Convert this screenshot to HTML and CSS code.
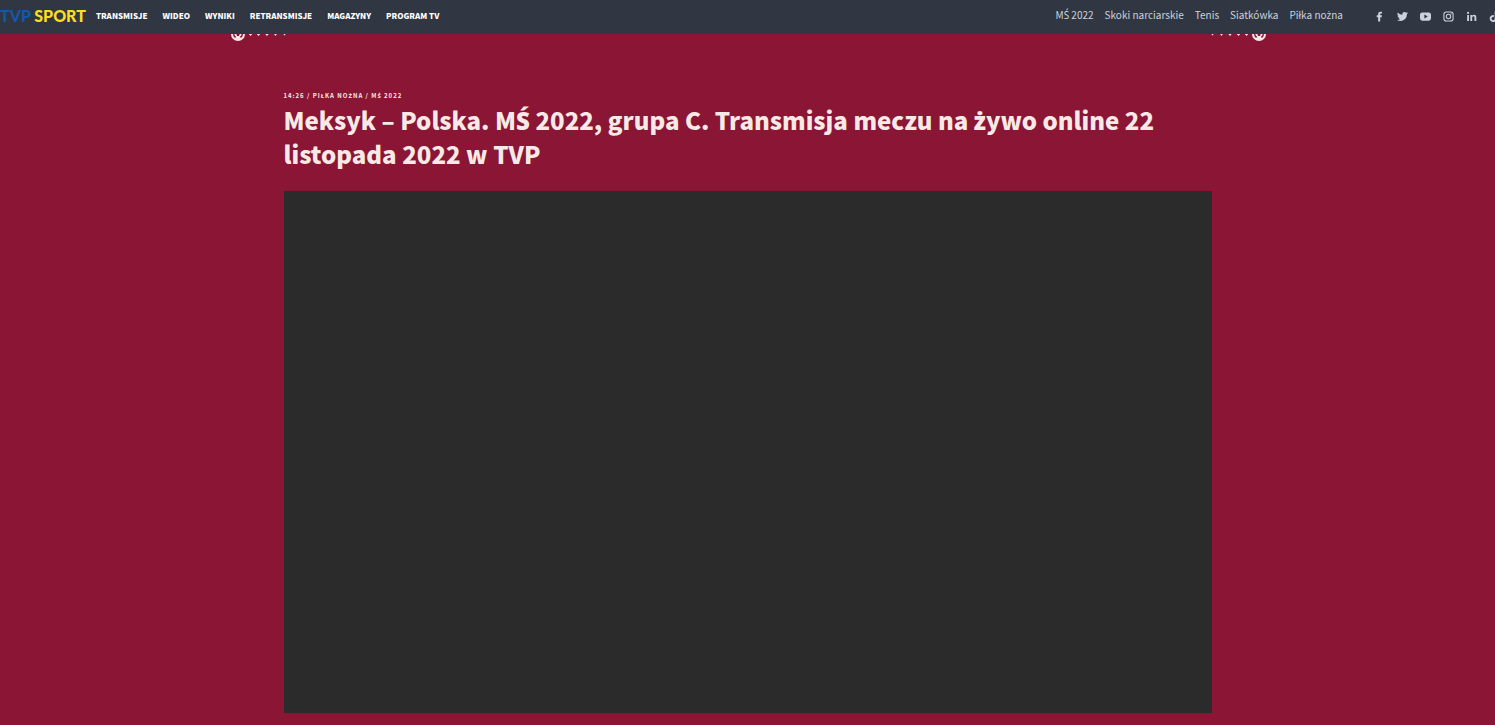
FILE: index.html
```html
<!DOCTYPE html>
<html lang="pl">
<head>
<meta charset="utf-8">
<meta name="viewport" content="width=device-width, initial-scale=1">
<title>Meksyk – Polska. MŚ 2022 | TVP Sport</title>
<link rel="stylesheet" href="styles.css">
</head>
<body>
<header class="topbar">
  <a class="logo" href="#"><span class="logo-tvp">TVP</span> <span class="logo-sport">SPORT</span></a>
  <nav class="main-nav" aria-label="Menu">
    <a href="#">TRANSMISJE</a>
    <a href="#">WIDEO</a>
    <a href="#">WYNIKI</a>
    <a href="#">RETRANSMISJE</a>
    <a href="#">MAGAZYNY</a>
    <a href="#">PROGRAM TV</a>
  </nav>
  <nav class="topics" aria-label="Tematy">
    <a href="#">M<span class="accented">Ś</span> 2022</a>
    <a href="#">Skoki narciarskie</a>
    <a href="#">Tenis</a>
    <a href="#">Siatkówka</a>
    <a href="#">Piłka no<span class="accented">ż</span>na</a>
  </nav>
  <div class="social">
    <a href="#" aria-label="Facebook"><svg viewBox="0 0 24 24"><path d="M9 23V13.500H6V9h3V6.500C9 3 11 1.500 14.500 1.500c1.400 0 2.500.1 3 .2v4h-2c-1.600 0-2 .7-2 1.600V9h3.800l-.6 4.500h-3.200V23z"/></svg></a>
    <a href="#" aria-label="Twitter"><svg viewBox="0 0 24 24"><path d="M24 4.600a10 10 0 0 1-2.800.8 5 5 0 0 0 2.100-2.700 10 10 0 0 1-3.100 1.200 4.900 4.900 0 0 0-8.400 4.500A14 14 0 0 1 1.700 3.200a4.900 4.900 0 0 0 1.500 6.500 5 5 0 0 1-2.200-.6 4.900 4.900 0 0 0 3.900 4.900 5 5 0 0 1-2.200.1 4.900 4.900 0 0 0 4.600 3.400A10 10 0 0 1 0 19.500a14 14 0 0 0 21.500-12.400A10 10 0 0 0 24 4.600z"/></svg></a>
    <a href="#" aria-label="YouTube"><svg viewBox="0 0 24 24"><path fill-rule="evenodd" d="M5 3h14q5 0 5 5v8q0 5-5 5H5q-5 0-5-5V8q0-5 5-5zm4.500 4.500v9l7.500-4.500z"/></svg></a>
    <a href="#" aria-label="Instagram"><svg viewBox="0 0 24 24"><g fill="none" stroke="currentColor" stroke-width="2.300"><rect x="2" y="2" width="20" height="20" rx="5"/><circle cx="12" cy="12" r="4.800"/></g><circle cx="17.800" cy="6.200" r="1.500"/></svg></a>
    <a href="#" aria-label="LinkedIn"><svg viewBox="0 0 24 24"><path d="M2.500 8.500h4V22h-4zM9.500 8.500h4v1.900c.8-1.400 2.300-2.300 4.300-2.300 3.900 0 4.700 2.600 4.700 6V22h-4v-7c0-1.700-.1-3.500-2.300-3.500s-2.700 1.700-2.700 3.500v7h-4z"/><circle cx="4.500" cy="4.300" r="2.400"/></svg></a>
    <a href="#" aria-label="TikTok"><svg viewBox="0 0 24 24"><path d="M12.500 0h4c.2 3 2.300 5.200 5.500 5.500v4c-2.100 0-4-.7-5.500-1.800V16c0 5-3.500 8-7.500 8s-7.500-3-7.500-7.500S5.500 8.700 10.500 9v4.200c-3-.5-4.900 1-4.900 3.200s1.500 3.600 3.400 3.600 3.500-1.300 3.500-4z"/></svg></a>
  </div>
</header>
<main class="page">
  <svg class="ornament" viewBox="0 0 1036 8" aria-hidden="true">
    <defs>
      <g id="rosette">
        <circle r="6" fill="none" stroke="#f7eae6" stroke-width="2"/>
        <path d="M-4-1l1 3h2l-1-3zM4-1l-1 3h-2l1-3zM-2 2h4l1 3h-6z" fill="#f7eae6"/>
      </g>
      <path id="dots" d="M10-1h5l-2.500 3zM18-1h5l-2.500 3zM26.500-1h5l-2.500 3zM35.500-1h4l-2 3zM44.500-1h4l-2 2.500z" fill="#f7eae6"/>
    </defs>
    <g transform="translate(8 0)"><use href="#rosette"/><use href="#dots"/></g>
    <g transform="translate(1029 0) scale(-1 1)"><use href="#rosette"/><use href="#dots"/></g>
  </svg>
  <article class="article">
    <p class="meta">14:26 / PIŁKA NO<span class="accented">Ż</span>NA / M<span class="accented">Ś</span> 2022</p>
    <h1 class="title">Meksyk – Polska. M<span class="accented">Ś</span> 2022, grupa C. Transmisja meczu na <span class="accented">ż</span>ywo online 22 listopada 2022 w TVP</h1>
    <div class="player"></div>
  </article>
</main>
</body>
</html>
```
FILE: styles.css
```css
* { box-sizing: border-box; }
body {
  margin: 0;
  background: #8a1535;
  color: #f7eae6;
  font-family: "Noto Sans CJK SC", "Noto Sans", sans-serif;
  overflow-x: hidden;
}
a { color: inherit; text-decoration: none; }
.accented { font-family: "Noto Sans", sans-serif; }
.topbar {
  display: flex;
  align-items: center;
  height: 34px;
  padding-bottom: 2px;
  background: #303742;
  overflow: hidden;
  white-space: nowrap;
}
.logo {
  font: 900 16px/20px Lato, sans-serif;
  margin-right: 10px;
}
.logo-tvp { color: #1257a8; }
.logo-sport { color: #fbdf1e; }
.main-nav {
  display: flex;
  gap: 15px;
  padding-bottom: 2px;
  color: #fff;
  font-size: 8px;
  font-weight: 900;
}
.topics {
  display: flex;
  gap: 11px;
  margin-left: auto;
  padding-bottom: 2px;
  color: #ccd1dc;
  font-size: 10px;
  line-height: 16px;
}
.social {
  display: flex;
  gap: 12px;
  margin: 0 -5px 0 31px;
  color: #ccd1dc;
}
.social a { display: flex; }
.social svg {
  width: 11px;
  height: 11px;
  fill: currentColor;
}
.page { padding: 0 16px 12px; }
.ornament {
  display: block;
  width: 100%;
  max-width: 1036px;
  margin: 0 auto;
}
.article {
  max-width: 928px;
  margin: 48px auto 0;
}
.meta {
  margin: 0;
  font-size: 6px;
  line-height: 12px;
  font-weight: 700;
  letter-spacing: 1px;
}
.title {
  margin: 1px 0 20px;
  font-size: 24px;
  line-height: 34px;
  font-weight: 900;
}
.title .accented { line-height: 24px; }
.player {
  aspect-ratio: 16 / 9;
  background: #2b2b2b;
}
```
